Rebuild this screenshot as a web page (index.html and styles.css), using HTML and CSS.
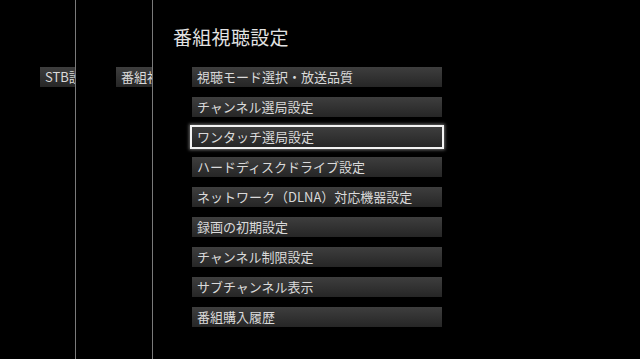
FILE: index.html
```html
<!DOCTYPE html>
<html lang="ja">
<head>
<meta charset="utf-8">
<title>番組視聴設定</title>
<link rel="stylesheet" href="styles.css">
</head>
<body>
<div class="screen">
  <div class="panel narrow">
    <div class="item side">STB設定</div>
  </div>
  <div class="panel narrow">
    <div class="item side">番組視聴設定</div>
  </div>
  <div class="panel main">
    <h1 class="title">番組視聴設定</h1>
    <ul class="menu">
      <li class="item">視聴モード選択・放送品質</li>
      <li class="item">チャンネル選局設定</li>
      <li class="item selected">ワンタッチ選局設定</li>
      <li class="item">ハードディスクドライブ設定</li>
      <li class="item">ネットワーク（DLNA）対応機器設定</li>
      <li class="item">録画の初期設定</li>
      <li class="item">チャンネル制限設定</li>
      <li class="item">サブチャンネル表示</li>
      <li class="item">番組購入履歴</li>
    </ul>
  </div>
</div>
</body>
</html>
```
FILE: styles.css
```css
html, body {
  margin: 0;
  padding: 0;
  background: #000;
}
body {
  font-family: "Noto Sans CJK JP", "Noto Sans", sans-serif;
  color: #d6d6d6;
}
.screen {
  display: flex;
  width: 640px;
  height: 359px;
  overflow: hidden;
}
.panel {
  height: 100%;
  box-sizing: border-box;
}
.narrow {
  width: 76px;
  flex: none;
  border-right: 1px solid #7a7a7a;
  overflow: hidden;
  padding: 67px 0 0 40px;
}
.narrow + .narrow {
  width: 77px;
}
.main {
  flex: 1;
  padding: 21px 0 0 20px;
}
.title {
  margin: 0 0 15px 0;
  font-size: 19px;
  font-weight: normal;
  line-height: 31px;
  color: #e2e2e2;
  letter-spacing: 0.3px;
}
.menu {
  list-style: none;
  margin: 0;
  padding: 0 0 0 19px;
  display: flex;
  flex-direction: column;
  gap: 10px;
  width: 250px;
}
.item {
  height: 20px;
  line-height: 20px;
  font-size: 13px;
  padding-left: 5px;
  background: linear-gradient(#3e3e3e, #262626);
  white-space: nowrap;
  overflow: hidden;
  color: #dadada;
}
.side {
  width: 80px;
}
.selected {
  outline: 2px solid #f2f2f2;
  box-shadow: 0 0 3px 3px rgba(180, 180, 180, 0.6);
}
```
